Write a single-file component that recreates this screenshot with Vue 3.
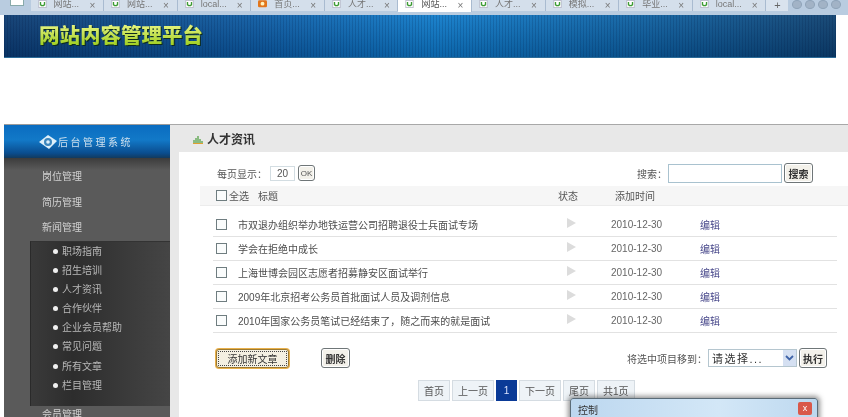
<template>
  <div class="pagina">
    <div class="abas">
      <span class="aba-nova"></span>
      <div v-for="(aba, i) in abas" :key="i" class="aba" :class="{ ativa: aba.ativa }">
        <svg v-if="aba.laranja" class="ico-aba" viewBox="0 0 14 12"><rect width="14" height="11" rx="2" fill="#e2761c"/><circle cx="7" cy="5.5" r="3" fill="#fff3c0"/></svg>
        <svg v-else class="ico-aba" viewBox="0 0 12 12"><rect x="0.5" y="0.5" width="11" height="11" fill="#fff" stroke="#aab" /><path d="M3 3v4q3 3 6 0V3" fill="none" stroke="#3d9c34" stroke-width="2"/></svg>
        <span class="aba-texto">{{ aba.nome }}</span>
        <span class="aba-x">×</span>
      </div>
      <span class="aba-mais">+</span>
      <span class="bolinhas"><i></i><i></i><i></i><i></i></span>
    </div>

    <header class="banner">
      <h1>网站内容管理平台</h1>
    </header>

    <div class="principal">
      <aside class="lateral">
        <div class="lateral-topo">
          <svg class="olho" viewBox="0 0 20 18">
            <path d="M1 9 10 2l9 6-8 8z" fill="#dff0fa"/>
            <circle cx="10" cy="9" r="4" fill="#3c86bd"/>
            <circle cx="10" cy="9" r="1.8" fill="#dff0fa"/>
          </svg>
          <span>后台管理系统</span>
        </div>
        <nav class="menu">
          <a v-for="m in menuTopo" :key="m" class="menu-item">{{ m }}</a>
          <ul class="submenu">
            <li v-for="s in submenu" :key="s">{{ s }}</li>
          </ul>
          <a class="menu-item ultimo">会员管理</a>
        </nav>
      </aside>

      <main class="conteudo">
        <div class="titulo">
          <svg class="ico-titulo" viewBox="0 0 10 9"><path d="M1 8V5M3 8V3M5 8V1M7 8V4M9 8V6" stroke="#4b9d3d" stroke-width="1.2"/><path d="M0 8.5h10" stroke="#e0a030"/></svg>
          <b>人才资讯</b>
        </div>
        <div class="corpo">
          <div class="filtros">
            <div class="por-pagina">
              <span>每页显示：</span>
              <input class="campo-qtd" value="20" />
              <button class="btn btn-ok">OK</button>
            </div>
            <div class="busca">
              <span>搜索：</span>
              <input class="campo-busca" />
              <button class="btn btn-busca">搜索</button>
            </div>
          </div>

          <div class="cabecalho">
            <span class="caixa"></span>
            <span class="todos">全选</span>
            <span class="cab-titulo">标题</span>
            <span class="cab-estado">状态</span>
            <span>添加时间</span>
          </div>

          <div class="lista">
            <div v-for="(item, i) in artigos" :key="i" class="linha">
              <span class="caixa"></span>
              <span class="linha-titulo">{{ item }}</span>
              <svg class="seta" viewBox="0 0 9 10"><path d="M0 0l9 5-9 5z" fill="#dcdcdc"/></svg>
              <span class="data">2010-12-30</span>
              <a class="editar">编辑</a>
            </div>
          </div>

          <div class="acoes">
            <button class="btn btn-novo">添加新文章</button>
            <button class="btn btn-apagar">删除</button>
            <div class="mover">
              <span>将选中项目移到：</span>
              <div class="selecao">
                <span>请选择...</span>
                <i class="sel-seta"><svg viewBox="0 0 9 6"><path d="M1 1l3.5 3.5L8 1" fill="none" stroke="#3f63a8" stroke-width="1.8"/></svg></i>
              </div>
              <button class="btn btn-exec">执行</button>
            </div>
          </div>

          <div class="paginacao">
            <a v-for="p in paginas" :key="p" :class="{ atual: p === '1' }">{{ p }}</a>
          </div>
        </div>
      </main>
    </div>

    <div class="dialogo">
      <span>控制</span>
      <i class="fechar">x</i>
    </div>
  </div>
</template>

<script setup>
const abas = [
  { nome: '网站...' },
  { nome: '网站...' },
  { nome: 'local...' },
  { nome: '首页...', laranja: true },
  { nome: '人才...' },
  { nome: '网站...', ativa: true },
  { nome: '人才...' },
  { nome: '模拟...' },
  { nome: '毕业...' },
  { nome: 'local...' }
]

const menuTopo = ['岗位管理', '简历管理', '新闻管理']
const submenu = ['职场指南', '招生培训', '人才资讯', '合作伙伴', '企业会员帮助', '常见问题', '所有文章', '栏目管理']

const artigos = [
  '市双退办组织举办地铁运营公司招聘退役士兵面试专场',
  '学会在拒绝中成长',
  '上海世博会园区志愿者招募静安区面试举行',
  '2009年北京招考公务员首批面试人员及调剂信息',
  '2010年国家公务员笔试已经结束了，随之而来的就是面试'
]

const paginas = ['首页', '上一页', '1', '下一页', '尾页', '共1页']
</script>

<style>
html, body { margin: 0; background: #fff; overflow: hidden; }
</style>

<style scoped>
.pagina {
  position: relative;
  width: 848px;
  height: 417px;
  overflow: hidden;
  background: #fff;
  font-family: "Liberation Sans", "Noto Sans CJK SC", sans-serif;
  font-size: 10px;
  color: #555;
  filter: blur(0.4px);
}

/* barra de abas do navegador */
.abas {
  display: flex;
  height: 15px;
  background: #b9cce0;
  padding-left: 10px;
  box-sizing: border-box;
  overflow: hidden;
}
.aba-nova { width: 14px; height: 6px; background: #fff; margin-right: 6.5px; border: 1px solid #8aa; border-top: 0; box-sizing: border-box; }
.aba {
  display: flex;
  align-items: flex-start;
  width: 73.6px;
  height: 11px;
  padding-left: 7px;
  box-sizing: border-box;
  background: #d4dfeb;
  border-right: 1px solid #a9bbd0;
  color: #777;
  line-height: 9px;
  font-size: 9px;
  flex-shrink: 0;
}
.aba.ativa { background: #fff; height: 12px; color: #555; }
.ico-aba { width: 9px; height: 8px; flex-shrink: 0; margin-right: 7px; }
.aba-texto { width: 36px; white-space: nowrap; }
.aba-x { color: #777; font-size: 10px; line-height: 11px; }
.aba-mais { width: 22px; text-align: center; color: #666; font-size: 11px; line-height: 11px; background: #d9e3ee; height: 11px; }
.bolinhas { display: flex; flex: 1; gap: 3px; padding-left: 4px; }
.bolinhas i { width: 10px; height: 9px; border-radius: 50%; background: #a2b3c6; border: 1px solid #8fa3b8; box-sizing: border-box; }

/* faixa azul */
.banner {
  height: 43px;
  width: 832px;
  margin-left: 4px;
  padding-left: 35px;
  box-sizing: border-box;
  display: flex;
  align-items: center;
  background:
    repeating-linear-gradient(90deg, rgba(0, 20, 60, .16) 0 1px, transparent 1px 3px),
    linear-gradient(180deg, rgba(255, 255, 255, .06), rgba(0, 20, 50, .22)),
    linear-gradient(90deg, #0b3a70 0%, #0c5ba3 30%, #0f7ccb 52%, #0d5f9f 78%, #0d406f 100%);
  border-bottom: 1px solid #2c6c99;
}
.banner h1 {
  margin: 0 0 5px;
  font-family: "Noto Sans CJK SC", sans-serif;
  font-size: 20.5px;
  line-height: 24px;
  font-weight: 900;
  background: linear-gradient(180deg, #f0f98c, #9ccd1e);
  -webkit-background-clip: text;
  background-clip: text;
  color: transparent;
  filter: drop-shadow(1px 1px 0 #0e2c1e);
}

.principal {
  display: flex;
  margin: 66px 0 0 4px;
  height: 293px;
}

/* coluna esquerda */
.lateral { width: 166px; flex-shrink: 0; background: #575757; color: #ddd; }
.lateral-topo {
  height: 34px;
  display: flex;
  align-items: center;
  padding-left: 34px;
  box-sizing: border-box;
  background: linear-gradient(180deg, #0a6cc0 0%, #1279c8 45%, #0a4d8f 85%, #123a5e 100%);
  border-top: 1px solid #9a9a9a;
  color: #cfe0ee;
  letter-spacing: 2.5px;
}
.olho { width: 20px; height: 18px; }
.menu { padding-top: 6px; background: linear-gradient(180deg, #3c3c3c, #5a5a5a 12px); height: 259px; }
.menu-item { display: block; height: 25.5px; line-height: 25.5px; padding-left: 38px; color: #d2d2d2; }
.submenu {
  list-style: none;
  margin: 0 0 0 26px;
  padding: 0 0 8px;
  height: 165px;
  box-sizing: border-box;
  background: linear-gradient(90deg, #3a3a3a, #2d2d2d 30%, #454545 100%);
  border-left: 1px solid #2a2a2a;
  border-top: 1px solid #333;
  color: #b8b8b8;
}
.submenu li { position: relative; height: 19.2px; line-height: 19.2px; padding-left: 31px; }
.submenu li::before {
  content: "";
  position: absolute;
  left: 22px;
  top: 7px;
  width: 5px;
  height: 5px;
  border-radius: 50%;
  background: #f0f0f0;
}
.ultimo { margin-top: -4px; }

/* coluna de conteudo */
.conteudo { flex: 1; display: flex; flex-direction: column; background: #e8e8e8; border-top: 1px solid #a8a8a8; }
.titulo {
  display: flex;
  align-items: center;
  height: 27px;
  padding-left: 23px;
  color: #333;
  font-size: 12px;
}
.ico-titulo { width: 10px; height: 9px; margin: 2px 4px 0 0; }
.corpo { flex: 1; background: #fff; margin-left: 9px; padding: 11px 0 0 21px; }

.filtros { display: flex; justify-content: space-between; align-items: center; height: 20px; padding-right: 35px; }
.por-pagina, .busca { display: flex; align-items: center; }
.por-pagina { padding-left: 17px; }
.por-pagina span { width: 53px; white-space: nowrap; }
.campo-qtd {
  width: 25px;
  height: 15px;
  box-sizing: border-box;
  margin: 0 3px 0 0;
  padding: 0;
  text-align: center;
  border: 1px solid #d3dde2;
  font: inherit;
  color: #555;
}
.busca span { margin-right: 1px; }
.campo-busca { width: 114px; height: 19px; box-sizing: border-box; margin: 0 2px 0 0; border: 1px solid #a9c2cf; }

.btn {
  box-sizing: border-box;
  padding: 0;
  background: #f3f1ea;
  border: 1px solid #6f7678;
  border-radius: 3px;
  font-family: inherit;
  font-size: 10px;
  color: #333;
  box-shadow: inset 0 0 0 1px #fff;
}
.btn-ok { width: 17px; height: 16px; font-size: 8px; color: #555; }
.btn-busca { width: 29px; height: 20px; font-weight: bold; }

.cabecalho {
  display: flex;
  align-items: center;
  height: 19px;
  margin-top: 3px;
  padding-left: 16px;
  background: #f6f6f6;
  border-bottom: 1px solid #ececec;
}
.todos { margin: 0 9px 0 2px; }
.cab-titulo { width: 300px; }
.cab-estado { width: 57px; }

.lista { margin: 7px 11px 0 13px; }
.linha {
  display: flex;
  align-items: center;
  height: 24px;
  padding-left: 3px;
  box-sizing: border-box;
  border-bottom: 1px solid #e2e2e2;
}
.caixa {
  width: 11px;
  height: 11px;
  box-sizing: border-box;
  border: 1px solid #6f7d80;
  background: #fafcfc;
  flex-shrink: 0;
}
.linha-titulo { width: 329px; margin-left: 11px; color: #4d4d4d; white-space: nowrap; }
.seta { width: 9px; height: 10px; margin-top: -3px; }
.data { width: 89px; margin-left: 35px; color: #666; }
.editar { color: #4a4a8c; }

.acoes { display: flex; align-items: center; margin-top: 15px; padding-left: 16px; height: 20px; }
.btn-novo {
  width: 73px;
  height: 19px;
  background: #f4f0e2;
  border: 1px solid #9d7a30;
  outline: 1px dotted #444;
  outline-offset: -3px;
  box-shadow: 0 0 0 1px #e8b04c;
}
.btn-apagar { width: 29px; height: 20px; margin-left: 32px; font-weight: bold; }
.mover { display: flex; align-items: center; margin-left: auto; padding-right: 21px; }
.mover > span { margin-right: 1px; }
.selecao {
  display: flex;
  align-items: center;
  justify-content: space-between;
  width: 89px;
  height: 18px;
  box-sizing: border-box;
  margin-right: 2px;
  padding-left: 3px;
  border: 1px solid #b5c6cf;
  color: #333;
  font-size: 11px;
  letter-spacing: 1.5px;
}
.sel-seta {
  width: 13px;
  height: 16px;
  display: flex;
  align-items: center;
  justify-content: center;
  background: #d5e0f2;
}
.sel-seta svg { width: 9px; height: 6px; }
.btn-exec { width: 28px; height: 20px; font-weight: bold; }

.paginacao { display: flex; gap: 2px; margin: 12px 0 0 218px; height: 21px; }
.paginacao a {
  display: flex;
  align-items: center;
  justify-content: center;
  padding: 0 5px;
  background: #eef3f7;
  border: 1px solid #d5dce2;
  color: #555;
}
.paginacao a.atual { width: 21px; box-sizing: border-box; background: #0a3a97; border-color: #0a3a97; color: #dbe4ff; }

/* janela flutuante que cobre a paginacao */
.dialogo {
  position: absolute;
  left: 570px;
  top: 398px;
  width: 248px;
  height: 30px;
  box-sizing: border-box;
  padding: 3px 0 0 7px;
  background: linear-gradient(90deg, #bcd7ef, #d3e7f7 60%, #bdd8ef);
  border: 1px solid #5b6c78;
  border-radius: 3px 3px 0 0;
  box-shadow: 0 0 5px 2px rgba(60, 60, 60, .55);
  color: #333;
}
.fechar {
  position: absolute;
  right: 5px;
  top: 3px;
  width: 14px;
  height: 13px;
  background: #d9584a;
  border-radius: 2px;
  color: #fff;
  font-style: normal;
  font-size: 9px;
  line-height: 12px;
  text-align: center;
}
</style>
